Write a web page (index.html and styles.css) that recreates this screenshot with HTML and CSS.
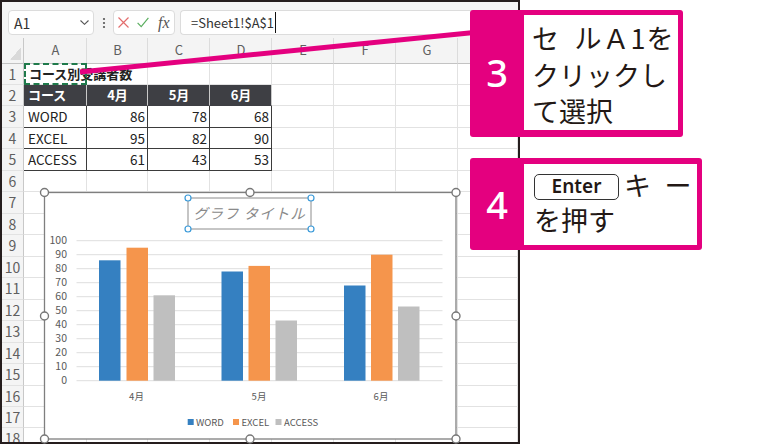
FILE: index.html
```html
<!DOCTYPE html>
<html lang="ja">
<head>
<meta charset="utf-8">
<title>Excel</title>
<link rel="stylesheet" href="styles.css">
</head>
<body>
<div class="page">
  <div class="excel">
    <div class="toolbar">
      <div class="namebox"><span>A1</span><svg class="chev" width="9" height="5" viewBox="0 0 9 5"><path d="M0.5 0.5 L4.5 4.3 L8.5 0.5" fill="none" stroke="#555" stroke-width="1.1"/></svg></div>
      <div class="vdots"><svg width="4" height="12" viewBox="0 0 4 12"><circle cx="2" cy="2" r="1.1" fill="#555"/><circle cx="2" cy="6" r="1.1" fill="#555"/><circle cx="2" cy="10" r="1.1" fill="#555"/></svg></div>
      <div class="fbtns">
        <svg class="ico" width="11" height="11" viewBox="0 0 11 11"><path d="M0.5 0.5 L10.5 10.5 M10.5 0.5 L0.5 10.5" stroke="#e36d6d" stroke-width="1.2" fill="none"/></svg>
        <svg class="ico" width="12" height="11" viewBox="0 0 12 11"><path d="M0.6 5.8 L4.2 9.6 L11.4 0.8" stroke="#5aae5f" stroke-width="1.2" fill="none"/></svg>
        <span class="fx">fx</span>
      </div>
      <div class="formula"><span class="ftext">=Sheet1!$A$1</span><span class="caret"></span></div>
    </div>
    <div class="sheet">
      <div class="ch corner"></div><div class="ch">A</div><div class="ch">B</div><div class="ch">C</div><div class="ch">D</div><div class="ch">E</div><div class="ch">F</div><div class="ch">G</div><div class="ch">H</div>
      <div class="rh">1</div><div class="a1">コース別受講者数</div><div></div><div></div><div></div><div></div><div></div><div></div><div></div>
      <div class="rh">2</div><div class="th">コース</div><div class="th m">4月</div><div class="th m">5月</div><div class="th m">6月</div><div></div><div></div><div></div><div></div>
      <div class="rh">3</div><div class="td">WORD</div><div class="td n">86</div><div class="td n">78</div><div class="td n">68</div><div></div><div></div><div></div><div></div>
      <div class="rh">4</div><div class="td">EXCEL</div><div class="td n">95</div><div class="td n">82</div><div class="td n">90</div><div></div><div></div><div></div><div></div>
      <div class="rh">5</div><div class="td">ACCESS</div><div class="td n">61</div><div class="td n">43</div><div class="td n">53</div><div></div><div></div><div></div><div></div>
      <div class="rh">6</div><div></div><div></div><div></div><div></div><div></div><div></div><div></div><div></div>
      <div class="rh">7</div><div></div><div></div><div></div><div></div><div></div><div></div><div></div><div></div>
      <div class="rh">8</div><div></div><div></div><div></div><div></div><div></div><div></div><div></div><div></div>
      <div class="rh">9</div><div></div><div></div><div></div><div></div><div></div><div></div><div></div><div></div>
      <div class="rh">10</div><div></div><div></div><div></div><div></div><div></div><div></div><div></div><div></div>
      <div class="rh">11</div><div></div><div></div><div></div><div></div><div></div><div></div><div></div><div></div>
      <div class="rh">12</div><div></div><div></div><div></div><div></div><div></div><div></div><div></div><div></div>
      <div class="rh">13</div><div></div><div></div><div></div><div></div><div></div><div></div><div></div><div></div>
      <div class="rh">14</div><div></div><div></div><div></div><div></div><div></div><div></div><div></div><div></div>
      <div class="rh">15</div><div></div><div></div><div></div><div></div><div></div><div></div><div></div><div></div>
      <div class="rh">16</div><div></div><div></div><div></div><div></div><div></div><div></div><div></div><div></div>
      <div class="rh">17</div><div></div><div></div><div></div><div></div><div></div><div></div><div></div><div></div>
      <div class="rh">18</div><div></div><div></div><div></div><div></div><div></div><div></div><div></div><div></div>
    </div>
  </div>

  <svg class="chart" width="426" height="258" viewBox="38 186 426 258">
    <rect x="44.5" y="192.5" width="411.5" height="246.5" fill="#fff" stroke="#7f7f7f" stroke-width="1.3"/>
    <g stroke="#dedede" stroke-width="1">
      <line x1="76.5" y1="240.7" x2="442.5" y2="240.7"/>
      <line x1="76.5" y1="254.7" x2="442.5" y2="254.7"/>
      <line x1="76.5" y1="268.7" x2="442.5" y2="268.7"/>
      <line x1="76.5" y1="282.7" x2="442.5" y2="282.7"/>
      <line x1="76.5" y1="296.7" x2="442.5" y2="296.7"/>
      <line x1="76.5" y1="310.7" x2="442.5" y2="310.7"/>
      <line x1="76.5" y1="324.7" x2="442.5" y2="324.7"/>
      <line x1="76.5" y1="338.7" x2="442.5" y2="338.7"/>
      <line x1="76.5" y1="352.7" x2="442.5" y2="352.7"/>
      <line x1="76.5" y1="366.7" x2="442.5" y2="366.7"/>
      <line x1="76.5" y1="380.7" x2="442.5" y2="380.7"/>
    </g>
    <g class="ylab" text-anchor="end">
      <text x="67" y="244.3">100</text>
      <text x="67" y="258.3">90</text>
      <text x="67" y="272.3">80</text>
      <text x="67" y="286.3">70</text>
      <text x="67" y="300.3">60</text>
      <text x="67" y="314.3">50</text>
      <text x="67" y="328.3">40</text>
      <text x="67" y="342.3">30</text>
      <text x="67" y="356.3">20</text>
      <text x="67" y="370.3">10</text>
      <text x="67" y="384.3">0</text>
    </g>
    <g fill="#3580c1">
      <rect x="99" y="260.3" width="21.5" height="120.4"/>
      <rect x="221.5" y="271.5" width="21.5" height="109.2"/>
      <rect x="344" y="285.5" width="21.5" height="95.2"/>
    </g>
    <g fill="#f5954c">
      <rect x="126.5" y="247.7" width="21.5" height="133"/>
      <rect x="248.5" y="265.9" width="21.5" height="114.8"/>
      <rect x="371" y="254.7" width="21.5" height="126"/>
    </g>
    <g fill="#bfbfbf">
      <rect x="153.5" y="295.3" width="21.5" height="85.4"/>
      <rect x="275.5" y="320.5" width="21.5" height="60.2"/>
      <rect x="398" y="306.5" width="21.5" height="74.2"/>
    </g>
    <g class="xlab" text-anchor="middle">
      <text x="136.5" y="400">4月</text>
      <text x="259" y="400">5月</text>
      <text x="381" y="400">6月</text>
    </g>
    <rect x="187.7" y="419" width="6" height="6" fill="#3580c1"/>
    <rect x="233" y="419" width="6" height="6" fill="#f5954c"/>
    <rect x="275.5" y="419" width="6" height="6" fill="#bfbfbf"/>
    <g class="leg">
      <text x="196" y="425.5">WORD</text>
      <text x="241.5" y="425.5">EXCEL</text>
      <text x="284" y="425.5">ACCESS</text>
    </g>
    <rect x="188" y="198" width="123" height="31" fill="none" stroke="#8c8c8c" stroke-width="1"/>
    <text class="ctitle" x="249.5" y="218.8" text-anchor="middle">グラフ タイトル</text>
    <g fill="#fff" stroke="#3a9ad9" stroke-width="1.2">
      <circle cx="188" cy="198" r="3"/>
      <circle cx="311" cy="198" r="3"/>
      <circle cx="188" cy="229" r="3"/>
      <circle cx="311" cy="229" r="3"/>
    </g>
    <g fill="#fff" stroke="#777" stroke-width="1.4">
      <circle cx="44.5" cy="192.5" r="4"/>
      <circle cx="250" cy="192.5" r="4"/>
      <circle cx="456" cy="192.5" r="4"/>
      <circle cx="44.5" cy="316" r="4"/>
      <circle cx="456" cy="316" r="4"/>
      <circle cx="44.5" cy="439" r="4"/>
      <circle cx="250" cy="439" r="4"/>
      <circle cx="456" cy="439" r="4"/>
    </g>
  </svg>

  <svg class="pointer" width="783" height="444" viewBox="0 0 783 444">
    <line x1="80" y1="72" x2="474" y2="32.5" stroke="#e4007f" stroke-width="5"/>
  </svg>

  <div class="callout c3">
    <div class="num">3</div>
    <div class="body">
      <p class="l1">セ&ensp;ルＡ1を</p>
      <p>クリックし</p>
      <p>て選択</p>
    </div>
  </div>

  <div class="callout c4">
    <div class="num">4</div>
    <div class="body b4">
      <p><span class="key">Enter</span>キ&ensp;ー</p>
      <p>を押す</p>
    </div>
  </div>
</div>
</body>
</html>
```

FILE: styles.css
```css
* {
  box-sizing: border-box;
  margin: 0;
  padding: 0;
}

html, body {
  width: 783px;
  height: 444px;
  overflow: hidden;
  background: #fff;
}

body {
  font-family: "Noto Sans CJK JP", "Noto Sans", sans-serif;
  color: #222;
}

.page {
  position: relative;
  width: 783px;
  height: 444px;
}

/* ---------- Excel window ---------- */
.excel {
  width: 520px;
  height: 444px;
  border: 2px solid #251d1d;
  overflow: hidden;
  background: #fff;
  display: flex;
  flex-direction: column;
}

.toolbar {
  flex: none;
  height: 36px;
  background: #f4f4f4;
  display: flex;
  align-items: flex-start;
  padding: 8px 0 0 6px;
}

.namebox {
  width: 86px;
  height: 25px;
  background: #fff;
  border: 1px solid #dcdcdc;
  border-radius: 4px;
  display: flex;
  align-items: center;
  justify-content: space-between;
  padding: 0 4px 0 5px;
  font-size: 14px;
  color: #333;
}

.vdots {
  width: 19px;
  height: 25px;
  display: flex;
  align-items: center;
  justify-content: center;
}

.fbtns {
  width: 62px;
  height: 25px;
  background: #fff;
  border: 1px solid #dcdcdc;
  border-radius: 4px;
  display: flex;
  align-items: center;
  padding-left: 4px;
  gap: 8px;
}

.fx {
  font-family: "Liberation Serif", serif;
  font-style: italic;
  font-size: 16px;
  color: #555;
  line-height: 1;
  margin-left: 1px;
}

.formula {
  flex: 1;
  height: 25px;
  margin-left: 5px;
  background: #fff;
  border: 1px solid #dcdcdc;
  border-right: none;
  border-radius: 4px 0 0 4px;
  display: flex;
  align-items: center;
  padding-left: 10px;
  font-size: 13px;
  color: #333;
}

.caret {
  width: 1.5px;
  height: 21px;
  background: #111;
  margin-left: 1px;
}

/* ---------- grid ---------- */
.sheet {
  flex: none;
  display: grid;
  grid-template-columns: 22px 63px 61px 62px 62px 62px 62px 62px 60px;
  grid-template-rows: 25.5px repeat(18, 21.47px);
}

.sheet > div {
  border-right: 1px solid #e2e2e2;
  border-bottom: 1px solid #e2e2e2;
  font-size: 13.5px;
  line-height: 20px;
  white-space: nowrap;
  padding: 0 3px 0 4px;
  color: #222;
}

.sheet > .ch {
  background: #f4f4f4;
  border-right-color: #dcdcdc;
  border-bottom-color: #c3c3c3;
  text-align: center;
  color: #5f5f5f;
  font-size: 13px;
  line-height: 24px;
}

.sheet > .corner {
  position: relative;
  border-right-color: #c8c8c8;
}

.corner::after {
  content: "";
  position: absolute;
  right: 2px;
  bottom: 3px;
  width: 11px;
  height: 13px;
  background: linear-gradient(to bottom right, transparent 50%, #d9d9d9 51%);
}

.sheet > .rh {
  background: #f4f4f4;
  border-right-color: #c8c8c8;
  border-bottom-color: #e2e2e2;
  text-align: center;
  color: #5f5f5f;
  font-size: 14px;
  padding: 0;
}

.sheet > .a1 {
  position: relative;
  font-weight: 700;
  font-size: 13px;
  padding-left: 5px;
}

.a1::after {
  content: "";
  position: absolute;
  top: -1px;
  left: 0;
  right: -1px;
  bottom: -1px;
  border: 2px dashed #1f7a4b;
}

.sheet > .th {
  background: #3e3f44;
  color: #fff;
  font-weight: 700;
  font-size: 13px;
  border-right-color: #c9c9c9;
  border-bottom-color: #3e3f44;
}

.sheet > .m {
  text-align: center;
}

.sheet > .td {
  border-right-color: #3b3b3b;
  border-bottom-color: #3b3b3b;
}

.sheet > .n {
  text-align: right;
  padding-right: 2px;
}

/* ---------- chart ---------- */
.chart {
  position: absolute;
  left: 38px;
  top: 186px;
}

.ylab text {
  font-family: "Noto Sans CJK JP", sans-serif;
  font-size: 10.5px;
  fill: #595959;
}

.xlab text {
  font-family: "Noto Sans CJK JP", sans-serif;
  font-size: 9.5px;
  fill: #595959;
}

.leg text {
  font-family: "Noto Sans CJK JP", sans-serif;
  font-size: 9.5px;
  fill: #595959;
}

.ctitle {
  font-family: "Noto Sans CJK JP", sans-serif;
  font-size: 14.5px;
  font-style: italic;
  letter-spacing: 1px;
  fill: #8a8a8a;
}

.pointer {
  position: absolute;
  left: 0;
  top: 0;
  pointer-events: none;
}

/* ---------- callouts ---------- */
.callout {
  position: absolute;
  display: flex;
  background: #e4007f;
  border-radius: 3px;
}

.c3 {
  left: 470px;
  top: 10px;
  width: 213px;
  height: 127px;
  padding: 5px 5px 7px 0;
}

.c4 {
  left: 470px;
  top: 158px;
  width: 232px;
  height: 92px;
  padding: 6px 5px 5px 0;
}

.num {
  width: 54px;
  flex: none;
  display: flex;
  align-items: center;
  justify-content: center;
  color: #fff;
  font-family: "Noto Sans", sans-serif;
  font-weight: 500;
  font-size: 38px;
  padding-bottom: 2px;
}

.body {
  flex: 1;
  background: #fff;
  padding: 5px 0 0 8px;
  font-size: 27px;
  line-height: 36.5px;
  color: #231815;
  white-space: nowrap;
}

.l1 {
  letter-spacing: 1px;
}

.b4 {
  padding: 3px 0 0 10px;
  line-height: 35px;
}

.key {
  display: inline-block;
  width: 85px;
  height: 26px;
  border: 1.5px solid #333;
  border-radius: 5px;
  font-family: "Noto Sans", sans-serif;
  font-weight: 600;
  font-size: 19px;
  line-height: 22px;
  text-align: center;
  vertical-align: middle;
  margin: -4px 5px 0 0;
  color: #231815;
}
```
